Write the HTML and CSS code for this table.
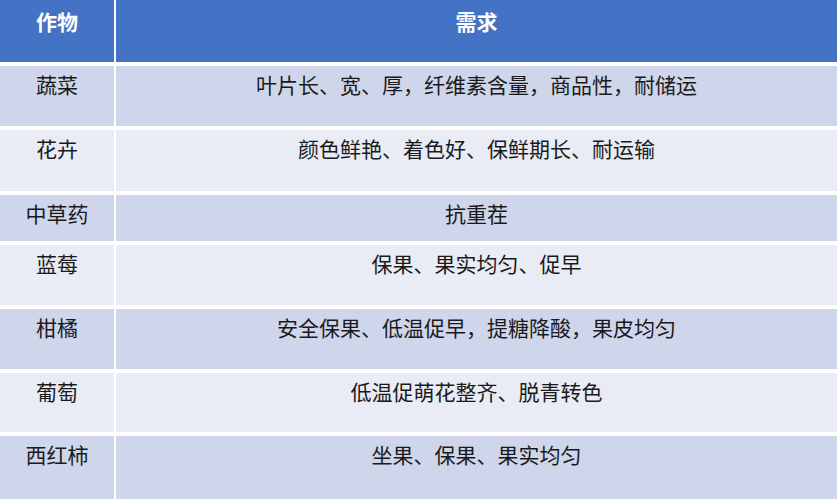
FILE: index.html
```html
<!DOCTYPE html>
<html lang="zh">
<head>
<meta charset="utf-8">
<title>作物需求</title>
<link rel="stylesheet" href="styles.css">
</head>
<body>
<div class="table">
  <div class="cell head">作物</div>
  <div class="cell head">需求</div>

  <div class="cell dark">蔬菜</div>
  <div class="cell dark">叶片长、宽、厚，纤维素含量，商品性，耐储运</div>

  <div class="cell light">花卉</div>
  <div class="cell light">颜色鲜艳、着色好、保鲜期长、耐运输</div>

  <div class="cell dark">中草药</div>
  <div class="cell dark">抗重茬</div>

  <div class="cell light">蓝莓</div>
  <div class="cell light">保果、果实均匀、促早</div>

  <div class="cell dark">柑橘</div>
  <div class="cell dark">安全保果、低温促早，提糖降酸，果皮均匀</div>

  <div class="cell light">葡萄</div>
  <div class="cell light">低温促萌花整齐、脱青转色</div>

  <div class="cell dark">西红柿</div>
  <div class="cell dark">坐果、保果、果实均匀</div>
</div>
</body>
</html>
```

FILE: styles.css
```css
html, body {
  margin: 0;
  padding: 0;
  background: #ffffff;
}

body {
  width: 837px;
  height: 499px;
  overflow: hidden;
  font-family: "Noto Sans CJK SC", "Noto Sans", sans-serif;
}

.table {
  display: grid;
  grid-template-columns: 114px 1fr;
  grid-template-rows: 62px 60px 61px 46px 60px 60px 59px 64px;
  column-gap: 2px;
  row-gap: 4px;
}

.cell {
  font-size: 21px;
  line-height: 24px;
  padding-top: 6px;
  text-align: center;
  color: #1a1a1a;
}

.head {
  background: #4472c4;
  color: #ffffff;
  font-weight: 700;
  padding-top: 9px;
}

.dark {
  background: #cfd5ea;
}

.light {
  background: #e9ebf5;
}
```
